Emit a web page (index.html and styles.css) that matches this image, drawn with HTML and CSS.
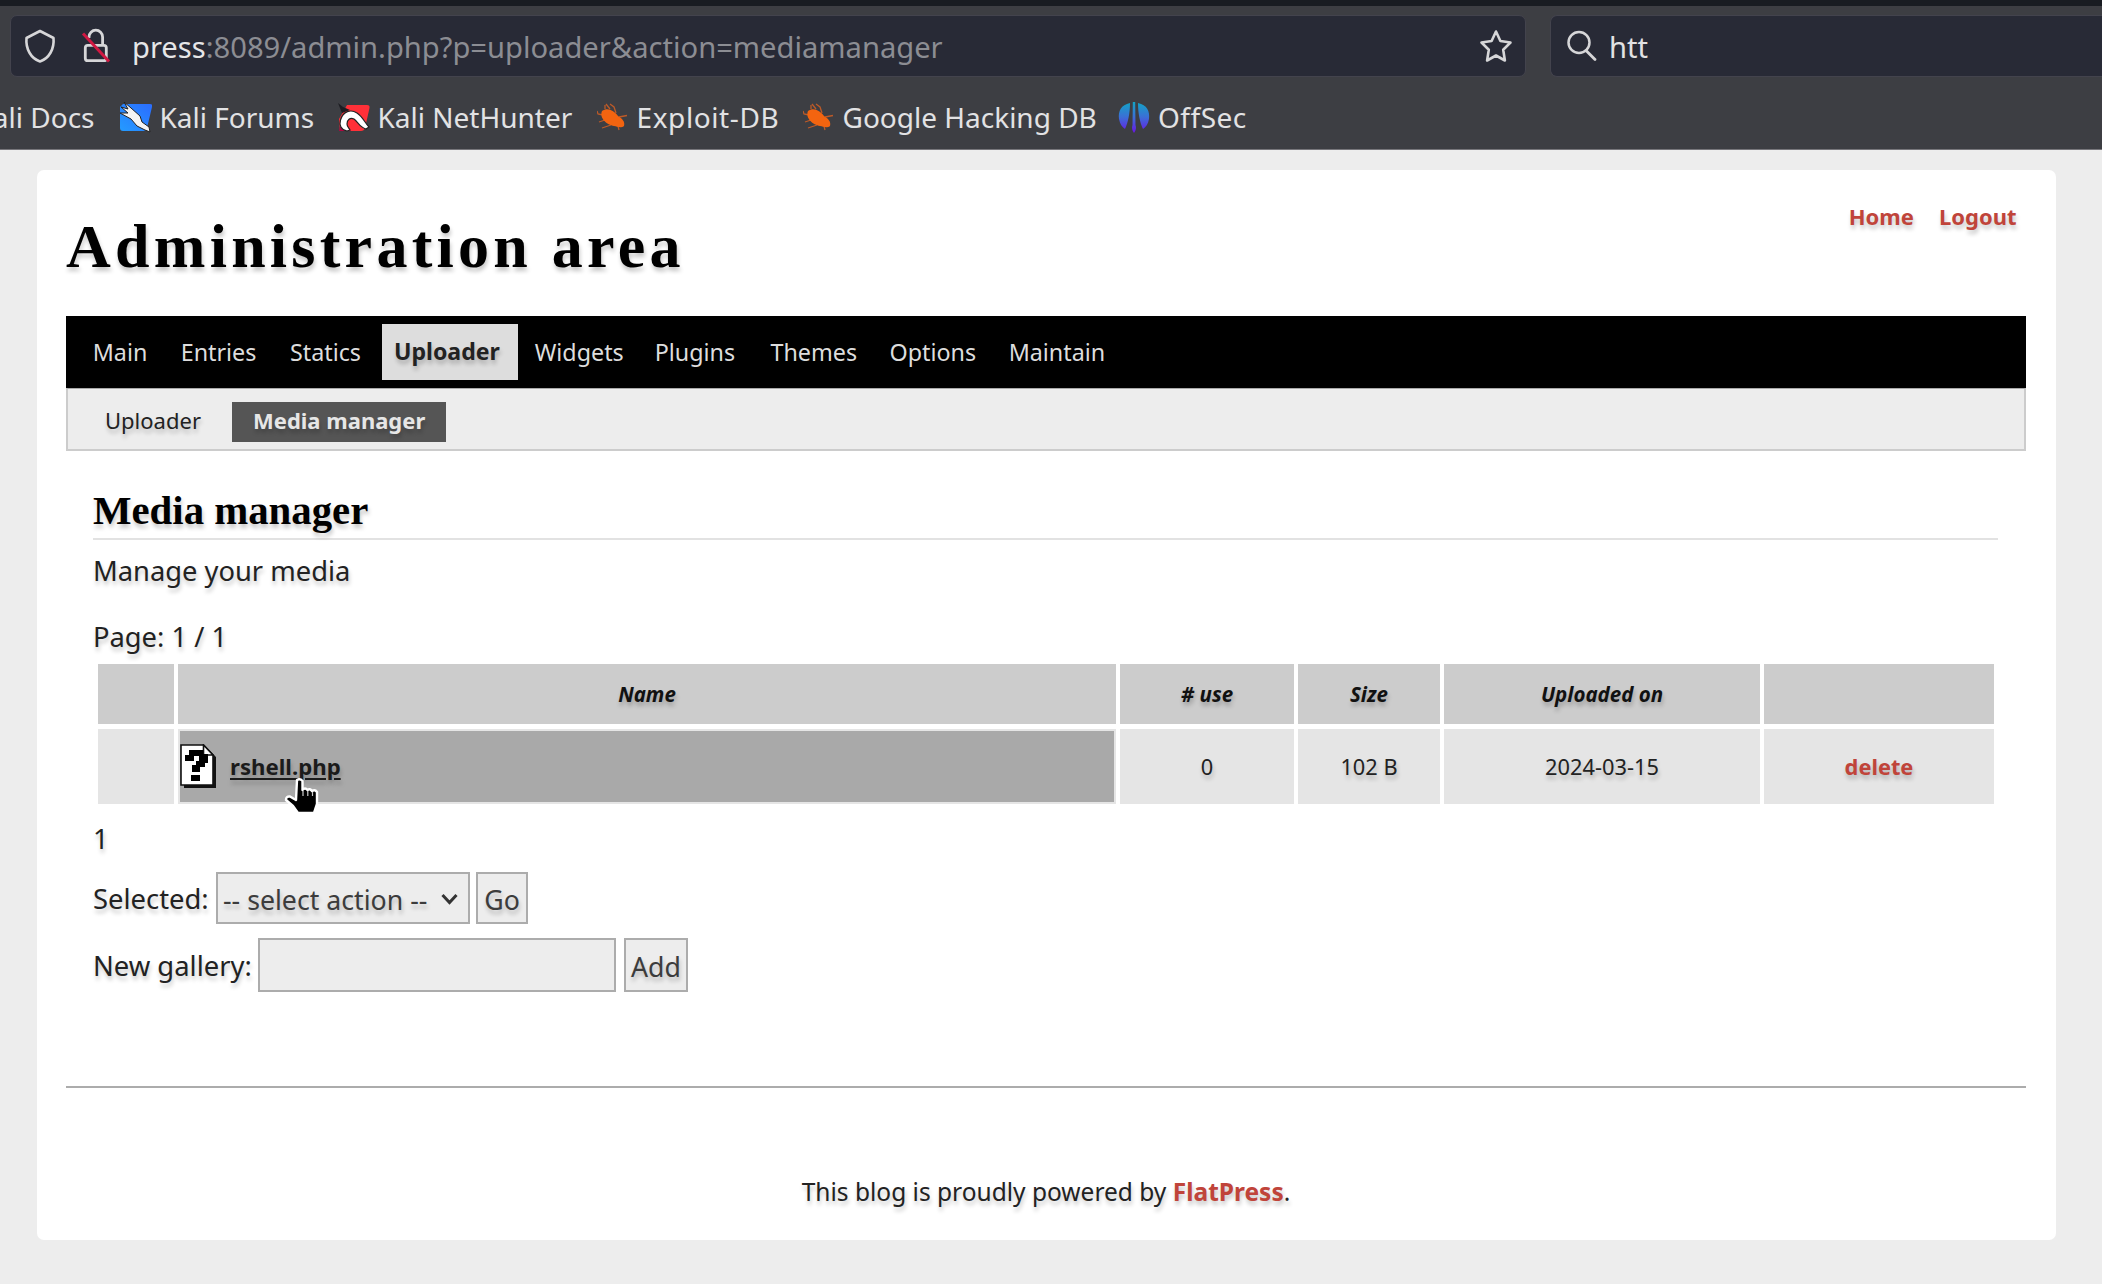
FILE: index.html
```html
<!DOCTYPE html>
<html lang="en">
<head>
<meta charset="utf-8">
<title>Administration area</title>
<link rel="stylesheet" href="styles.css">
</head>
<body>
<header class="chrome">
  <div class="tabstrip"></div>
  <div class="toolbar">
    <div class="urlbar">
      <svg class="shield" width="32" height="34" viewBox="0 0 32 34"><path d="M16 2 L29.500 9 C30.500 20 25 29.500 16 32.500 C7 29.500 1.500 20 2.500 9 Z" fill="none" stroke="#d6d6d8" stroke-width="2.600" stroke-linejoin="round"/></svg>
      <svg class="lock" width="30" height="36" viewBox="0 0 30 36"><rect x="4.300" y="17.300" width="21" height="15.400" rx="2.500" fill="none" stroke="#d6d6d8" stroke-width="2.800"/><path d="M8 10 V9 A6.800 6.800 0 0 1 21.600 9 V17" fill="none" stroke="#d6d6d8" stroke-width="2.800"/><path d="M2 5.500 L28 33.500" stroke="#d01842" stroke-width="3"/></svg>
      <span class="url"><span class="host">press</span>:8089/admin.php?p=uploader&amp;action=mediamanager</span>
      <svg class="star" width="34" height="34" viewBox="0 0 34 34"><path d="M17 2.500 L21.400 12 L31.500 13.500 L24.200 20.700 L25.900 31.500 L17 26.500 L8.100 31.500 L9.800 20.700 L2.500 13.500 L12.600 12 Z" fill="none" stroke="#d6d6d8" stroke-width="2.600" stroke-linejoin="round"/></svg>
    </div>
    <div class="search">
      <svg width="32" height="32" viewBox="0 0 32 32"><circle cx="13" cy="12.500" r="10.500" fill="none" stroke="#d6d6d8" stroke-width="2.500"/><path d="M20 20.500 L29 29.500" stroke="#d6d6d8" stroke-width="2.800" stroke-linecap="round"/></svg>
      <span>htt</span>
    </div>
  </div>
  <nav class="bookmarks">
    <a class="bm docs">Kali Docs</a>
    <a class="bm forums"><svg width="32" height="32" viewBox="0 0 32 32"><defs><linearGradient id="blue" x1="1" y1="0" x2="0" y2="1"><stop offset="0" stop-color="#2b6cff"/><stop offset="1" stop-color="#249bff"/></linearGradient></defs><path d="M3 3 H30 Q33 3 32 6 L27 27 Q26 30 23 30 H3 Q0 30 0 27 V6 Z" fill="url(#blue)"/><path d="M4 1 L11 7 L20 15 L22 21 L29 26 L30 31 L25 29 L17 25 L11 18 L0 12 L8 12 L1 6 L8 8 Z" fill="#f4f4f4" stroke="#222" stroke-width="1"/></svg>Kali Forums</a>
    <a class="bm hunter"><svg width="32" height="32" viewBox="0 0 32 32"><path d="M9 4 H29 Q32 4 31.500 7 L27 27 Q26 30 23 30 H2 L1 18 Z" fill="#ff3038"/><path d="M1 30 L3 20 L13 30 Z" fill="#b00640"/><path d="M0 2 L5 6 L12 9 L4 12 Z" fill="#1d1d22"/><path d="M9 30 C3 29 1 24 2.500 19 C5 10 13 8 19 12 C25 16 27 22 31 26 L28 28 C22 27 20 21 16 18 C12 16 9 19 9 23 C9 26 11 27 12 29 Z" fill="#fff" stroke="#222" stroke-width="1.200"/></svg>Kali NetHunter</a>
    <a class="bm exploit"><svg width="32" height="32" viewBox="0 0 32 32"><g fill="#f36410" stroke="#bd5a28"><path d="M8 8 L8 4 M13 8 L9 3 M19 12 L17 6 L13 3 M22 16 L30 14.500 M6 14 L1 13 L0 10 M8 19 L2 21 M14 24 L5 27 M21 25 L22 29" fill="none" stroke-width="1.300"/><path d="M5 10 C11 6 17 10 21 15 C26 18 28 21 27 25 C23 28 20 25 17 25 C10 24 2 17 5 10 Z" stroke="none"/></g></svg>Exploit-DB</a>
    <a class="bm ghdb"><svg width="32" height="32" viewBox="0 0 32 32"><g fill="#f36410" stroke="#bd5a28"><path d="M8 8 L8 4 M13 8 L9 3 M19 12 L17 6 L13 3 M22 16 L30 14.500 M6 14 L1 13 L0 10 M8 19 L2 21 M14 24 L5 27 M21 25 L22 29" fill="none" stroke-width="1.300"/><path d="M5 10 C11 6 17 10 21 15 C26 18 28 21 27 25 C23 28 20 25 17 25 C10 24 2 17 5 10 Z" stroke="none"/></g></svg>Google Hacking DB</a>
    <a class="bm offsec"><svg width="32" height="32" viewBox="0 0 32 32"><defs><linearGradient id="os" gradientUnits="userSpaceOnUse" x1="0" y1="0" x2="0" y2="32"><stop offset="0" stop-color="#0fa8c4"/><stop offset=".5" stop-color="#3b6fd6"/><stop offset="1" stop-color="#6a14e8"/></linearGradient></defs><path d="M12 2 C3 4 0 10 1 18 C2 23 4 26 7 28 C10 22 12 12 12 2 Z M20 2 C29 4 32 10 31 18 C30 23 28 26 25 28 C22 22 20 12 20 2 Z M14.800 1 H17.200 L17.500 24 Q19 28 16 32 Q13 28 14.500 24 Z" fill="url(#os)"/></svg>OffSec</a>
  </nav>
</header>
<main class="panel">
  <div class="account"><a>Home</a><a>Logout</a></div>
  <h1>Administration area</h1>
  <ul class="tabs">
    <li>Main</li><li>Entries</li><li>Statics</li><li class="current">Uploader</li><li>Widgets</li><li>Plugins</li><li>Themes</li><li>Options</li><li>Maintain</li>
  </ul>
  <ul class="subtabs"><li>Uploader</li><li class="current">Media manager</li></ul>
  <section class="content">
    <h2>Media manager</h2>
    <p class="lead">Manage your media</p>
    <p class="pages">Page: 1 / 1</p>
    <div class="table">
      <div class="th"></div><div class="th">Name</div><div class="th">#&nbsp;use</div><div class="th">Size</div><div class="th">Uploaded on</div><div class="th"></div>
      <div class="td"></div>
      <div class="td name">
        <svg width="36" height="44" viewBox="0 0 36 44"><path d="M4 3 H25 L36 13 V44 H4 Z" fill="#111"/><path d="M1 1 H23.500 L33 11 V41 H1 Z" fill="#fff" stroke="#111" stroke-width="1.600"/><path d="M23.500 1 V11 H33 Z" fill="#fff" stroke="#111" stroke-width="1.600"/><path d="M5 17 V11 H9 V6 H23 V10 H28 V19 H25 V23 H20 V28 H12 V21 H16 V17 H19 V12 H14 V17 Z M11 31 H20 V37 H11 Z" fill="#000"/></svg>
        <a class="file">rshell.php</a>
        <svg class="pointer" width="38" height="40" viewBox="0 0 38 40"><path d="M14 3 Q17 1 19.500 4 V13 Q22 10 24.500 13 Q27 11 29 14 Q32 12 34 15 V27 L31 36 H15 L10 29 L3 23 Q3 19 7 19.500 L13 23 Z" fill="#000" stroke="#fff" stroke-width="2.400" stroke-linejoin="round"/><path d="M20 14 V19 M24.800 14 V19 M29.500 15 V19" stroke="#ccc" stroke-width="1.200"/></svg>
      </div>
      <div class="td">0</div><div class="td">102 B</div><div class="td">2024-03-15</div><div class="td"><a class="delete">delete</a></div>
    </div>
    <p class="pager">1</p>
    <div class="row selected"><span class="label">Selected:</span><span class="field select">-- select action --<svg width="17" height="12" viewBox="0 0 17 12"><path d="M1.500 2 L8.500 9.500 L15.500 2" fill="none" stroke="#333" stroke-width="3"/></svg></span><button class="field go">Go</button></div>
    <div class="row gallery"><label class="label">New gallery:</label><input class="field text" type="text"><button class="field add">Add</button></div>
  </section>
  <footer>This blog is proudly powered by <a>FlatPress</a>.</footer>
</main>
</body>
</html>
```
FILE: styles.css
```css
* { box-sizing: border-box; }
body { margin: 0; background: #ededed; color: #222; font-family: "Noto Sans", sans-serif; height: 1284px; overflow: hidden; }
h1, h2, p, ul { margin: 0; padding: 0; font-weight: normal; }
ul { list-style: none; }
svg { flex: none; display: block; }

.chrome { height: 150px; background: #3d3e43; border-bottom: 1px solid #77767b; color: #e2e2e4; overflow: hidden; }
.tabstrip { height: 6px; background: #191c22; }
.toolbar { display: flex; gap: 24px; padding: 9px 0 0 10px; height: 71px; }
.urlbar, .search { display: flex; align-items: center; height: 62px; background: #282a36; border: 1px solid #43434d; border-radius: 7px; font-size: 29.150px; }
.urlbar { width: 1516px; padding: 0 12px 0 13px; color: #8c8d93; }
.lock { margin-left: 25px; }
.url { margin-left: 21px; padding-top: 2px; white-space: nowrap; }
.host { color: #e6e6e8; }
.star { margin-left: auto; }
.search { flex: 1; border-right: 0; border-radius: 7px 0 0 7px; padding-left: 15px; gap: 11px; color: #e2e2e4; }
.search span { padding-top: 2px; }
.bookmarks { display: flex; align-items: center; height: 80px; font-size: 28px; }
.bm { display: flex; align-items: center; gap: 8px; white-space: nowrap; flex: none; }
.docs { width: 119.500px; justify-content: flex-end; padding-right: 25px; }
.forums { width: 218px; }
.hunter { width: 259px; }
.exploit { width: 206px; letter-spacing: .6px; }
.ghdb { width: 315.500px; }
.offsec { letter-spacing: .5px; }

.panel { display: flex; flex-direction: column; width: 2019px; height: 1070px; margin: 20px 0 0 37px; padding: 0 30px 0 29px; background: #fff; border-radius: 7px; text-shadow: 1px 4px 4px rgba(0,0,0,.22); }
.panel a { color: #c0443a; font-weight: bold; }
.account { display: flex; justify-content: flex-end; gap: 25px; height: 30px; margin-top: 31px; padding-right: 9.500px; line-height: 30px; font-size: 22px; }
h1 { font: bold 62px/70px "Liberation Serif", serif; letter-spacing: 4.250px; color: #000; height: 105px; margin-top: -20px; }

.tabs { display: grid; grid-template-columns: 88px 109.300px 92px 152.700px 120px 115.800px 119px 119.200px auto; align-items: center; height: 72px; padding-left: 26.700px; background: #000; color: #ddd; font-size: 23.300px; text-shadow: none; }
.tabs li { padding-bottom: 1px; white-space: nowrap; }
.tabs .current { width: 136px; height: 56px; line-height: 54px; padding: 0 0 0 12px; font-weight: bold; font-size: 23.100px; background: #ddd; color: #222; text-shadow: 1px 4px 4px rgba(0,0,0,.22); }
.subtabs { display: flex; align-items: flex-start; height: 63px; padding: 13px 0 0 37px; background: #ededed; border: 2px solid #ccc; border-top: 1px solid #aaa; font-size: 22px; }
.subtabs li { width: 127px; line-height: 36px; }
.subtabs .current { width: 214px; height: 40px; padding-left: 21px; font-weight: bold; color: #e6e6e6; background: #555; }

.content { height: 635px; padding: 29px 28px 0 27px; }
h2 { font: bold 40.800px/61px "Liberation Serif", serif; color: #000; height: 60px; border-bottom: 2px solid #e2e2e2; }
.lead, .pages, .pager { font-size: 27.300px; }
.lead { line-height: 62px; }
.pages { padding-top: 8px; line-height: 54px; }
.table { display: grid; grid-template-columns: 76px 938px 174px 142px 316px 230px; grid-template-rows: 60px 75px; column-gap: 4px; row-gap: 4.500px; margin-left: 5px; }
.th, .td { display: flex; align-items: center; justify-content: center; }
.th { background: #ccc; font-size: 20.500px; font-weight: bold; font-style: italic; color: #111; }
.td { background: #e5e5e5; font-size: 21.800px; }
.td.name { position: relative; justify-content: flex-start; gap: 14px; background: #a9a9a9; border: 2px solid #e5e5e5; }
.panel .file { color: #1b1b1b; font-size: 22.200px; text-decoration: underline; text-decoration-thickness: 2px; text-underline-offset: 3px; }
.pointer { position: absolute; left: 103px; top: 46px; z-index: 2; }
.pager { padding-top: 2px; line-height: 66px; height: 68.500px; }
.row { display: flex; align-items: center; }
.label { font-size: 27.400px; }
.field { background: #ededed; border: 2px solid #acacac; border-radius: 0; font: 26.700px "Noto Sans", sans-serif; color: #3c3c3c; padding: 2px 0 0; margin: 0; height: 100%; text-shadow: inherit; }
.selected { height: 52px; }
.selected .label { width: 123px; }
.select { display: flex; align-items: center; justify-content: space-between; width: 254px; padding: 2px 10px 0 5px; white-space: nowrap; }
.go { width: 52px; margin-left: 6px; }
.gallery { height: 54px; margin-top: 14px; }
.gallery .label { width: 165px; }
.text { width: 358px; }
.add { width: 64px; margin-left: 8px; }

footer { border-top: 2px solid #acacac; text-align: center; font-size: 24.500px; line-height: 34px; padding-top: 87px; white-space: nowrap; }
```
